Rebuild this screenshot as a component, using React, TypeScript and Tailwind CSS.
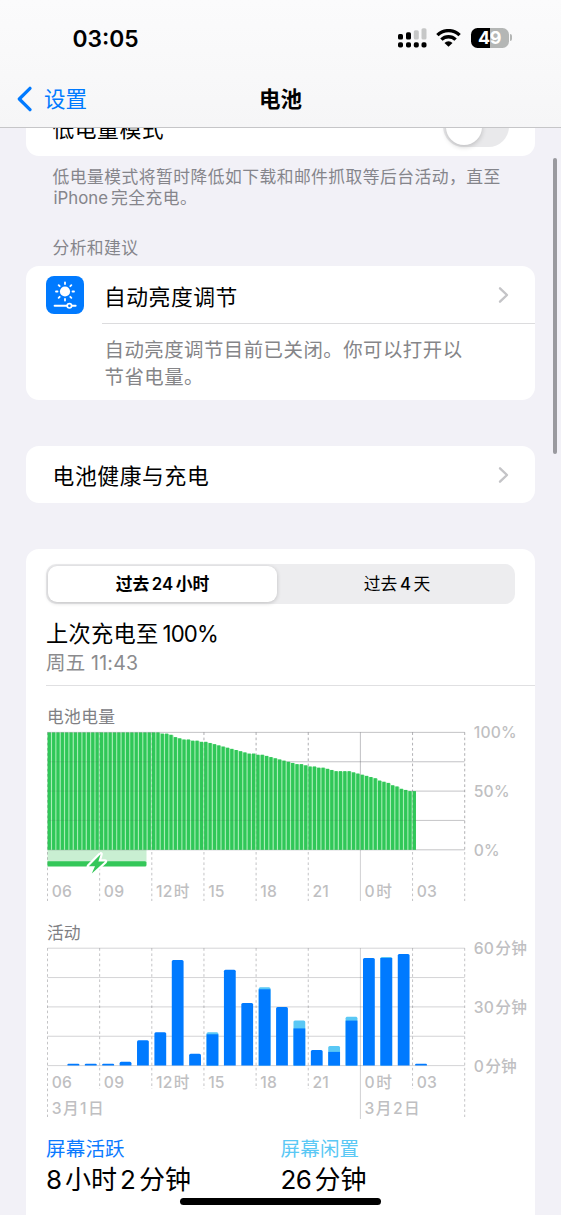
import { ReactNode } from "react"
import clsx from "clsx"

const BATTERY_LEVELS = [
  ...Array<number>(26).fill(100),
  99, 99, 98, 96, 95, 94, 94, 93, 93, 92, 92, 91, 90, 89, 88, 87, 86, 85, 84, 83,
  82, 82, 81, 81, 80, 79, 78, 77, 76, 75, 74, 73, 73, 72, 71, 71, 70, 70, 69, 68,
  67, 67, 67, 67, 66, 65, 64, 63, 62, 61, 59, 58, 57, 55, 54, 52, 51, 50, 50,
]

// minutes per hour: [active, idle]
const ACTIVITY: [number, number][] = [
  [0, 0], [1, 0], [1, 0], [1, 0], [2, 0], [13, 0], [17, 0], [54, 0], [6, 0], [16, 1], [49, 0],
  [32, 0], [39, 1], [30, 0], [19, 4], [8, 0], [7, 3], [23, 2], [55, 0], [55, 0.5], [57, 0], [1, 0],
]

const HOURS = ["06", "09", "12时", "15", "18", "21", "0时", "03"]

const LEFT = 1.5
const STEP = 52.15
const RIGHT = LEFT + STEP * 8
const PLOT = 117.4

function Mixed({ children }: { children: string }) {
  // small gap between latin digits and the chinese characters after them
  const parts = children.split(/(\d+)/).filter(Boolean)
  return (
    <>
      {parts.map((p, i) => (
        <tspan key={i} dx={i > 0 ? 1.2 : 0}>{p}</tspan>
      ))}
    </>
  )
}

function Grid({ top, ends }: { top: number; ends: number[] }) {
  return (
    <g>
      {[0, 1, 2, 3, 4].map((i) => (
        <line key={i} x1={LEFT} x2={RIGHT} y1={top + (PLOT / 4) * i} y2={top + (PLOT / 4) * i} stroke="#3c3c43" strokeOpacity={0.22} />
      ))}
      {ends.map((end, i) => (
        <line
          key={i}
          x1={LEFT + STEP * i}
          x2={LEFT + STEP * i}
          y1={top}
          y2={end}
          stroke="#3c3c43"
          strokeOpacity={i === 6 ? 0.24 : 0.3}
          strokeDasharray={i === 6 ? undefined : "2.6 2.6"}
        />
      ))}
    </g>
  )
}

function HourLabels({ y }: { y: number }) {
  return (
    <>
      {HOURS.map((h, i) => (
        <text key={h} x={LEFT + STEP * i + 4.2} y={y}><Mixed>{h}</Mixed></text>
      ))}
    </>
  )
}

const chartText = "block overflow-visible fill-[#bfbfc2] text-[15.7px] font-medium tracking-[0.2px]"

function BatteryChart() {
  const top = 6.4
  const bottom = top + PLOT
  const w = STEP / 12
  return (
    <svg width="489" height="180" className={chartText}>
      <rect x={LEFT} y={bottom} width="99" height="13" fill="#c9efd2" />
      <Grid top={top} ends={Array(9).fill(175)} />
      <g>
        {BATTERY_LEVELS.map((v, i) => (
          <g key={i}>
            <rect x={LEFT + w * i} y={bottom - (PLOT * v) / 100 + 0.5} width={i === 84 ? 3.4 : w} height={(PLOT * v) / 100 - 0.5} fill="#9debad" />
            <rect x={LEFT + w * i + 0.2} y={bottom - (PLOT * v) / 100} width="3.2" height={(PLOT * v) / 100} fill="#30c758" />
          </g>
        ))}
      </g>
      <g opacity="0.4">
        <Grid top={top} ends={Array(9).fill(bottom)} />
      </g>
      <path d={`M${LEFT} 135.2h97.5a1.5 1.5 0 0 1 1.5 1.5v2.4a1.5 1.5 0 0 1 -1.5 1.5h-97.5z`} fill="#34c759" />
      <path d="M54.6 128.2 L42.8 140.3 H49 L45.8 147.6 L59 135.4 H52.4 Z" fill="#34c759" stroke="#fff" strokeWidth="4.5" paintOrder="stroke" strokeLinejoin="round" />
      <HourLabels y={171.3} />
      <text x="427.7" y={top + 6}>100%</text>
      <text x="427.7" y={top + 6 + PLOT / 2}>50%</text>
      <text x="427.7" y={top + 6 + PLOT}>0%</text>
    </svg>
  )
}

function ActivityChart() {
  const top = 6.2
  const bottom = top + PLOT
  return (
    <svg width="489" height="180" className={chartText}>
      <Grid top={top} ends={[175, 147, 147, 147, 147, 147, 177, 147, 175]} />
      {ACTIVITY.map(([active, idle], i) => {
        const x = LEFT + (STEP / 3) * i + 2.6
        const h = ((active + idle) / 60) * PLOT
        const a = (active / 60) * PLOT
        if (!active) return null
        const r = Math.min(1.5, h / 2)
        return (
          <g key={i}>
            <path d={`M${x} ${bottom}v${-(h - r)}q0 ${-r} ${r} ${-r}h${11.8 - 2 * r}q${r} 0 ${r} ${r}v${h - r}z`} fill={idle ? "#5ac8f5" : "#007aff"} />
            {idle > 0 && <rect x={x} y={bottom - a} width="11.8" height={a} fill="#007aff" />}
          </g>
        )
      })}
      <HourLabels y={145.5} />
      <text x={LEFT + 4.2} y="172"><Mixed>3月1日</Mixed></text>
      <text x={LEFT + STEP * 6 + 4.2} y="172"><Mixed>3月2日</Mixed></text>
      <text x="427.7" y={top + 6}><Mixed>60分钟</Mixed></text>
      <text x="427.7" y={top + 6 + PLOT / 2}><Mixed>30分钟</Mixed></text>
      <text x="427.7" y={top + 6 + PLOT}><Mixed>0分钟</Mixed></text>
    </svg>
  )
}

function Chevron() {
  return (
    <svg width="12" height="18" viewBox="0 0 12 18" fill="none" stroke="#c4c4c7" strokeWidth="2.4" strokeLinecap="round" strokeLinejoin="round">
      <path d="M2 2.3 L9 9 L2 15.7" />
    </svg>
  )
}

function Card({ className, children }: { className?: string; children: ReactNode }) {
  return <section className={clsx("ml-[26px] w-[509px] shrink-0 bg-white", className)}>{children}</section>
}

function SignalIcon() {
  return (
    <svg width="30" height="20" viewBox="0 0 30 20">
      <rect x="0" y="6" width="5" height="5.6" rx="1.6" />
      <rect x="8" y="4.3" width="5" height="7.3" rx="1.6" />
      <rect x="15.8" y="2.2" width="5" height="9.4" rx="1.6" fill="#c6c7c7" />
      <rect x="23.5" y="0.2" width="5" height="11.4" rx="1.6" fill="#c6c7c7" />
      {[0, 8, 15.8, 23.5].map((x) => (
        <rect key={x} x={x} y="14.2" width="5" height="5.4" rx="1.8" />
      ))}
    </svg>
  )
}

function WifiIcon() {
  return (
    <svg width="25" height="18" viewBox="0 0 25 18" fill="none" stroke="#000" strokeWidth="3.4">
      <path d="M1.4 6.1 A16 16 0 0 1 23.6 6.1" />
      <path d="M5.4 10.6 A10.2 10.2 0 0 1 19.6 10.6" />
      <path d="M12.5 17.8 L8.5 13.9 A5.6 5.6 0 0 1 16.5 13.9 Z" fill="#000" stroke="none" />
    </svg>
  )
}

function StatusBar() {
  return (
    <div className="flex h-[71px] items-start justify-between pt-[23.5px] pl-[72.5px] pr-[49px]">
      <span className="text-[22.8px] leading-[30px] font-semibold">03:05</span>
      <div className="flex items-center pt-[4px]">
        <SignalIcon />
        <span className="ml-[8.5px]"><WifiIcon /></span>
        <div className="ml-[9.5px] flex h-5 w-[38px] items-center justify-center rounded-[6.5px] bg-linear-to-r from-black from-50% to-[#b4b6b5] to-50% text-[18px] leading-none font-bold tracking-[-0.5px] text-white">
          49
        </div>
        <span className="ml-px h-[7px] w-[2.5px] rounded-r-full bg-[#b4b6b5]" />
      </div>
    </div>
  )
}

function BrightnessIcon() {
  return (
    <svg width="38" height="38" viewBox="0 0 38 38" stroke="#fff" strokeLinecap="round">
      <rect width="38" height="38" rx="8" fill="#007aff" stroke="none" />
      <circle cx="19" cy="15.5" r="5.1" fill="#fff" stroke="none" />
      {[0, 45, 90, 135, 180, 225, 270, 315].map((deg) => (
        <line key={deg} x1="19" y1="8" x2="19" y2="6.5" strokeWidth="1.8" transform={`rotate(${deg} 19 15.5)`} />
      ))}
      <line x1="8.6" y1="29.8" x2="29.6" y2="29.8" strokeWidth="2" />
      <circle cx="23.4" cy="29.8" r="2.2" fill="#007aff" strokeWidth="1.7" />
    </svg>
  )
}

export default function App() {
  return (
    <div className="relative flex h-[1215px] w-[561px] flex-col overflow-hidden bg-[#f2f1f7] font-[Inter,'Noto_Sans_CJK_SC',sans-serif] text-black">
      <header className="h-[128px] shrink-0 border-b border-[#c6c6c8] bg-linear-to-b from-[#fbfbfc] to-[#f6f6f7]">
        <StatusBar />
        <div className="grid grid-cols-3 items-center text-[21.5px] leading-[56px]">
          <div className="flex items-center pl-[17px] text-[#007aff]">
            <svg width="15" height="26" viewBox="0 0 15 26" fill="none" stroke="currentColor" strokeWidth="3.2" strokeLinecap="round" strokeLinejoin="round">
              <path d="M13 2.3 L2.3 13 L13 23.7" />
            </svg>
            <span className="ml-3">设置</span>
          </div>
          <h1 className="text-center font-bold">电池</h1>
        </div>
      </header>

      <main className="flex min-h-0 flex-1 flex-col overflow-hidden">
        <Card className="flex h-[28px] items-end justify-between rounded-b-[13px] pr-[26px] pl-[26.5px]">
          <span className="mb-[13px] text-[21.8px] leading-[28px] tracking-[0.5px]">低电量模式</span>
          <div className="mb-[9px] flex h-[41px] w-[66px] items-center rounded-full bg-[#e9e9eb] pl-[2.5px]">
            <span className="size-9 rounded-full bg-white shadow-[0_2px_5px_rgba(0,0,0,0.18)]" />
          </div>
        </Card>

        <p className="mt-[11px] ml-[52.5px] text-[16.8px] leading-[21px] tracking-[0.46px] whitespace-nowrap text-[#85858b]">
          低电量模式将暂时降低如下载和邮件抓取等后台活动，直至
          <br />
          <span className="mr-[3px] ml-px tracking-[0px]">iPhone</span>完全充电。
        </p>
        <h2 className="mt-[27px] ml-[52.5px] text-[16.8px] leading-[24px] tracking-[0.4px] text-[#85858b]">分析和建议</h2>

        <Card className="mt-[6px] h-[134px] rounded-[13px]">
          <div className="flex h-[57px] items-center pr-[25px] pl-5">
            <BrightnessIcon />
            <span className="mt-[5px] ml-[20px] flex-1 text-[21.8px] tracking-[0.5px]">自动亮度调节</span>
            <Chevron />
          </div>
          <div className="ml-[76px] border-t border-[#dcdcde] pt-[13px] pl-[2.5px] text-[19.4px] leading-[26.5px] tracking-[0.5px] text-[#858588]">
            自动亮度调节目前已关闭。你可以打开以
            <br />
            节省电量。
          </div>
        </Card>

        <Card className="mt-[46px] flex h-[57px] items-center justify-between rounded-[13px] pr-[25px] pl-[26.5px]">
          <span className="mt-[4px] text-[21.8px] tracking-[0.6px]">电池健康与充电</span>
          <Chevron />
        </Card>

        <Card className="mt-[46px] h-[680px] rounded-t-[13px] pl-5">
          <div className="pt-[14.5px]">
            <div className="flex h-[40px] w-[469px] rounded-[10px] bg-[#ededef] p-[2px] text-[16.8px] leading-[37px]">
              <div className="h-9 w-[229px] rounded-[9px] bg-white text-center font-semibold shadow-[0_1px_4px_rgba(0,0,0,0.2)]">
                过去<span className="mx-[2.5px]">24</span>小时
              </div>
              <div className="flex-1 pl-[4px] text-center">
                过去<span className="mx-[2.5px] font-medium">4</span>天
              </div>
            </div>
          </div>
          <div className="border-b border-[#e0e0e2] pt-[14.5px] pb-[8px]">
            <div className="text-[22.2px] leading-[32px] tracking-[0.3px]">
              上次充电至<span className="ml-[4px] tracking-[-0.8px]">100%</span>
            </div>
            <div className="text-[19.5px] leading-[26.5px] tracking-[0.2px] text-[#8b8b8e]">周五 11:43</div>
          </div>
          <h3 className="mt-[18px] ml-px h-[22px] text-[16.8px] leading-[27px] tracking-[0.3px] text-[#808084]">电池电量</h3>
          <BatteryChart />
          <h3 className="mt-[14px] ml-px h-[22px] text-[16.8px] leading-[27px] text-[#808084]">活动</h3>
          <ActivityChart />
          <div className="mt-[13.5px] flex">
            <div className="w-[234.5px]">
              <div className="text-[19.5px] leading-[29px] tracking-[0.2px] text-[#0a7aff]">屏幕活跃</div>
              <div className="text-[26px] leading-[32px]">
                8<span className="mx-[3px]">小时</span>2<span className="ml-[3px]">分钟</span>
              </div>
            </div>
            <div>
              <div className="text-[19.5px] leading-[29px] tracking-[0.2px] text-[#5ac8f5]">屏幕闲置</div>
              <div className="text-[26px] leading-[32px]">
                <span className="tracking-[-0.5px]">26</span><span className="ml-[3px]">分钟</span>
              </div>
            </div>
          </div>
        </Card>
      </main>

      {/* scroll indicator and home bar float over the list */}
      <div className="absolute top-[158px] right-[4px] h-[296px] w-[4px] rounded-full bg-[#9a9a9f]" />
      <div className="absolute bottom-[10.5px] left-[180px] h-[6.5px] w-[201px] rounded-full bg-black" />
    </div>
  )
}
